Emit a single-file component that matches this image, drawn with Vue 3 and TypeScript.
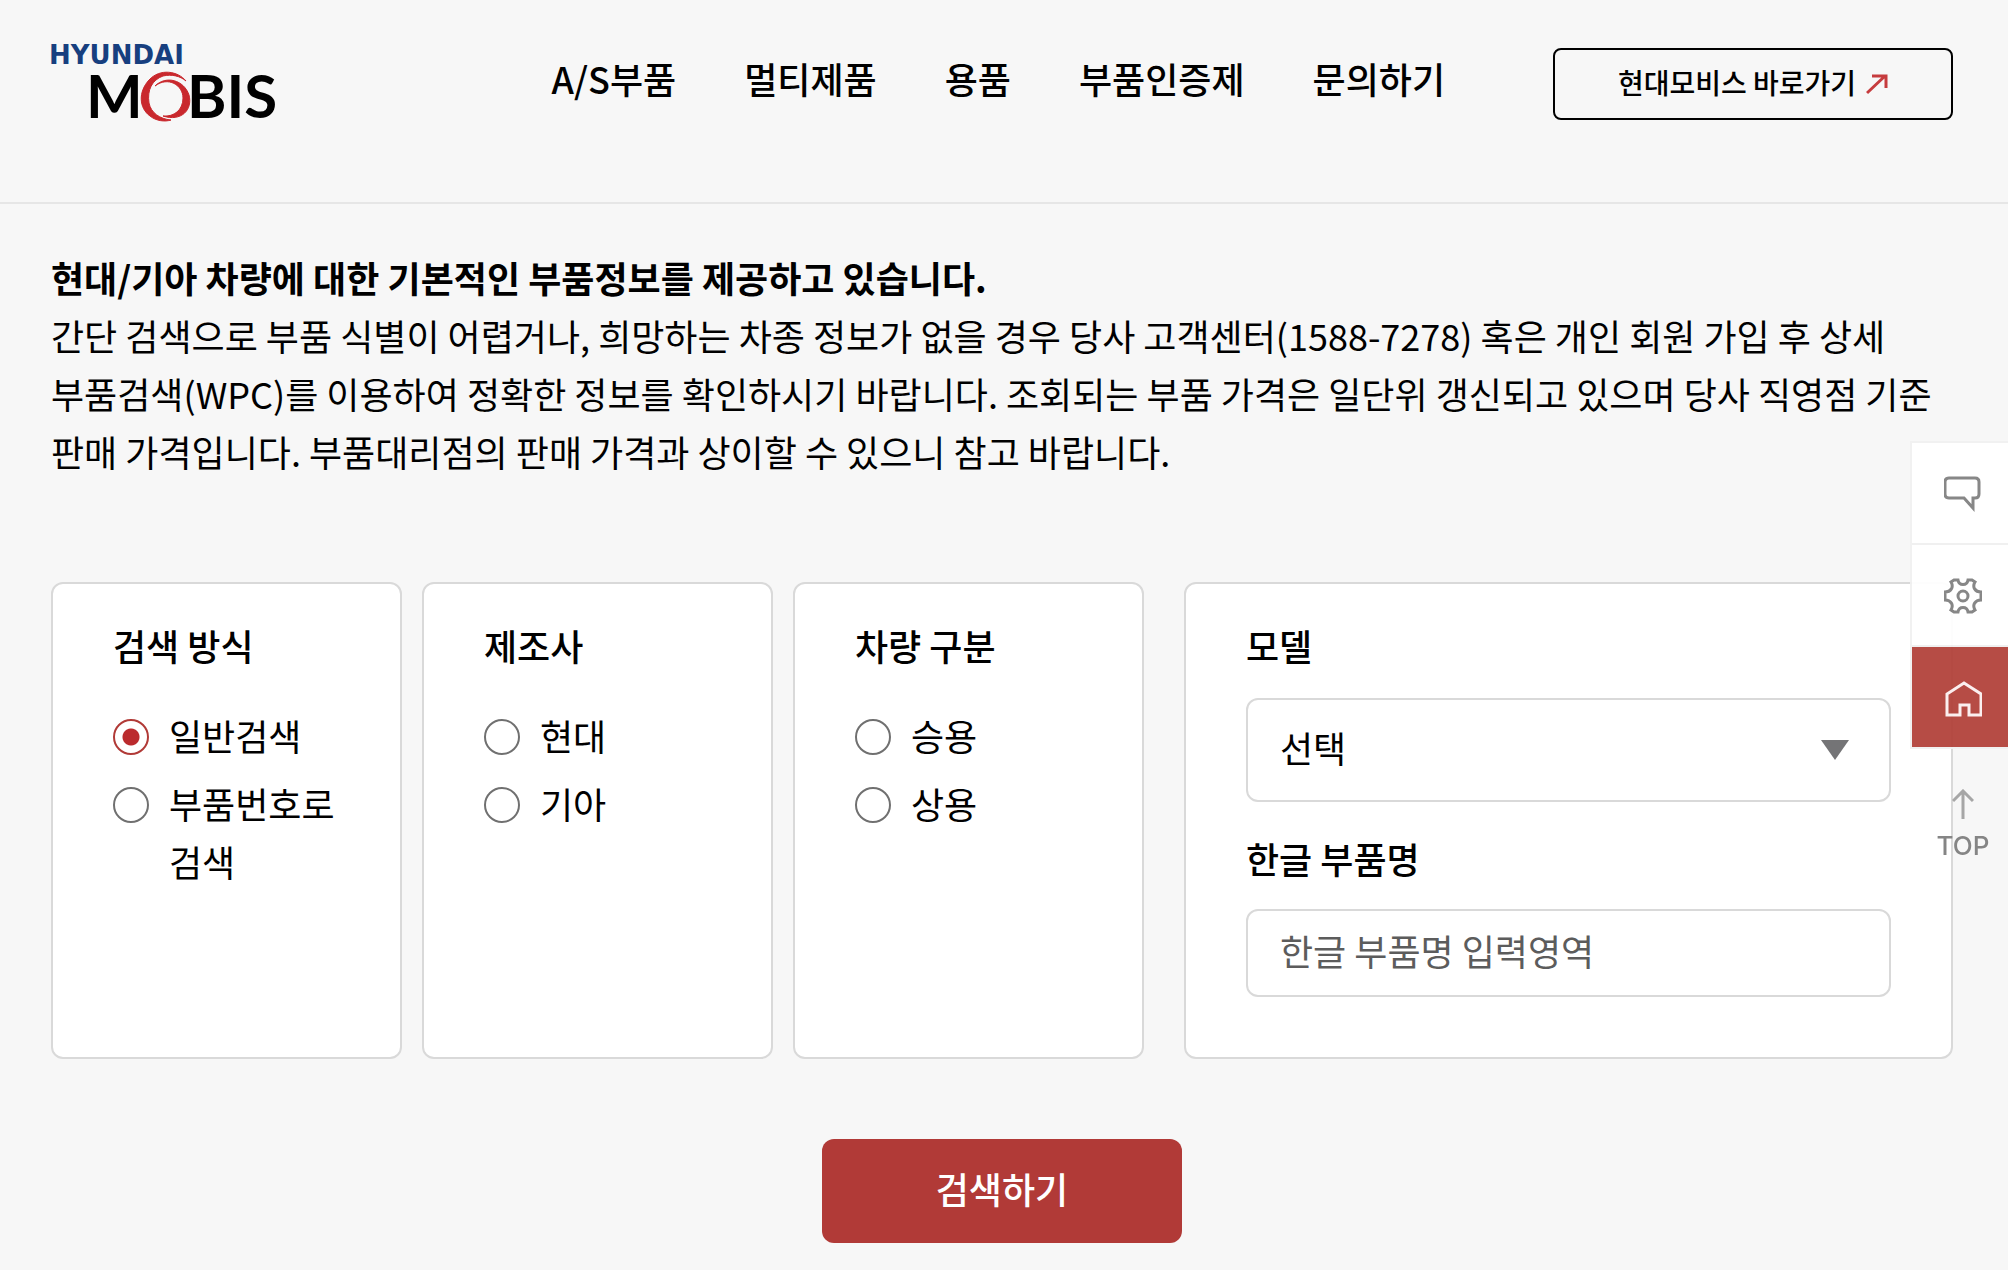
<script setup lang="ts">
import { ref } from 'vue'

interface RadioGroup {
  name: string
  title: string
  options: string[]
}

const menu: string[] = ['A/S부품', '멀티제품', '용품', '부품인증제', '문의하기']

const groups: RadioGroup[] = [
  { name: 'method', title: '검색 방식', options: ['일반검색', '부품번호로 검색'] },
  { name: 'maker', title: '제조사', options: ['현대', '기아'] },
  { name: 'vehicle', title: '차량 구분', options: ['승용', '상용'] },
]

const picked = ref<Record<string, string>>({ method: '일반검색', maker: '', vehicle: '' })
const model = ref('')
const partName = ref('')
</script>

<template>
  <div class="page">
    <header class="header">
      <a class="logo" href="#" aria-label="HYUNDAI MOBIS">
        <svg width="236" height="104" viewBox="0 0 236 104">
          <text class="logo-top" x="-2" y="30">HYUNDAI</text>
          <text class="logo-main" x="35" y="84">M</text>
          <text class="logo-main" x="136" y="84">BIS</text>
          <g fill="#c9282d" stroke="#c9282d">
            <path
              d="M135 47C127 37 109 34 98 46C87 58 88 74 99 82C105 87 114 88 120 86C109 85 100 79 98 69C96 56 101 46 112 42C121 40 129 42 135 47Z"
            />
            <path d="M104 52C115 41 133 46 138 61C142 76 130 88 112 82C123 83 132 76 132 64C132 51 117 42 104 52Z" />
          </g>
        </svg>
      </a>
      <nav class="menu">
        <a v-for="item in menu" :key="item" href="#">{{ item }}</a>
      </nav>
      <a class="shortcut" href="#">
        현대모비스 바로가기
        <svg width="22" height="22" viewBox="0 0 22 22" fill="none" stroke="#c63c3e" stroke-width="3">
          <path d="M1 20L19 3M6 3H20V15" />
        </svg>
      </a>
    </header>

    <main class="content">
      <div class="intro">
        <strong>현대/기아 차량에 대한 기본적인 부품정보를 제공하고 있습니다.</strong>
        <p>
          간단 검색으로 부품 식별이 어렵거나, 희망하는 차종 정보가 없을 경우 당사 고객센터(1588-7278) 혹은 개인 회원 가입 후 상세
          부품검색(WPC)를 이용하여 정확한 정보를 확인하시기 바랍니다. 조회되는 부품 가격은 일단위 갱신되고 있으며 당사 직영점 기준
          판매 가격입니다. 부품대리점의 판매 가격과 상이할 수 있으니 참고 바랍니다.
        </p>
      </div>

      <form @submit.prevent>
        <div class="panels">
          <div class="groups">
            <section
              v-for="group in groups"
              :key="group.name"
              class="card"
              role="radiogroup"
              :aria-labelledby="`${group.name}-title`"
            >
              <h2 :id="`${group.name}-title`">{{ group.title }}</h2>
              <div class="options">
                <label v-for="option in group.options" :key="option">
                  <input v-model="picked[group.name]" type="radio" :name="group.name" :value="option" />
                  <span>{{ option }}</span>
                </label>
              </div>
            </section>
          </div>

          <section class="card fields">
            <label for="model">모델</label>
            <div class="select">
              <select id="model" v-model="model">
                <option value="">선택</option>
              </select>
              <svg width="28" height="20" viewBox="0 0 28 20" fill="#747476"><path d="M0 0H28L14 20Z" /></svg>
            </div>
            <label for="part">한글 부품명</label>
            <input id="part" v-model="partName" type="text" placeholder="한글 부품명 입력영역" />
          </section>
        </div>
        <button class="submit" type="submit">검색하기</button>
      </form>
    </main>

    <aside class="quick">
      <div class="quick-box">
        <a href="#" aria-label="문의">
          <svg width="38" height="36" viewBox="0 0 38 36" fill="none" stroke="#808080" stroke-width="3">
            <path d="M5 2H31Q35 2 35 6V18Q35 22 31 22H29V32L20 22H5Q1 22 1 18V6Q1 2 5 2Z" />
          </svg>
        </a>
        <a href="#" aria-label="설정">
          <svg width="38" height="36" viewBox="0 0 38 36" fill="none" stroke="#808080" stroke-width="3">
            <path
              d="M10 2L14 2C15 8 23 8 24 2L28 2L31 4C28 9 31 14 37 14V22C31 22 28 27 31 32L28 34L24 34C23 28 15 28 14 34L10 34L7 32C10 27 7 22 1 22V14C7 14 10 9 7 4Z"
            />
            <circle cx="19" cy="18" r="5" />
          </svg>
        </a>
        <a class="home" href="#" aria-label="홈">
          <svg width="38" height="36" viewBox="0 0 38 36" fill="none" stroke="#fbeeee" stroke-width="3">
            <path d="M3 34V13L20 2L37 13V34H25V24H16V34Z" />
          </svg>
        </a>
      </div>
      <a class="top" href="#">
        <svg width="22" height="30" viewBox="0 0 22 30" fill="none" stroke="#a6a6a6" stroke-width="3">
          <path d="M11 30V2M1 12L11 2L21 12" />
        </svg>
        TOP
      </a>
    </aside>
  </div>
</template>

<style>
body {
  margin: 0;
  background: #f7f7f7;
}
</style>

<style scoped>
.page {
  box-sizing: border-box;
  min-height: 100vh;
  color: #000;
  background: #f7f7f7;
  font-family: 'Noto Sans CJK KR', sans-serif;
  font-size: 36px;
  line-height: 58px;
  word-break: keep-all;
}

.page * {
  box-sizing: border-box;
}

a {
  color: inherit;
  text-decoration: none;
}

.header {
  display: flex;
  align-items: flex-start;
  padding: 34px 55px 64px 51px;
  border-bottom: 2px solid #e6e6e6;
}

.logo svg {
  display: block;
  overflow: visible;
}

.logo-top {
  fill: #173f7f;
  font: 700 26px 'DejaVu Sans', sans-serif;
}

.logo-main {
  fill: #000;
  font: 700 60px Lato, sans-serif;
}

.menu {
  display: flex;
  gap: 68px;
  margin: 15px 108px 0 auto;
  font-weight: 500;
}

.shortcut {
  display: flex;
  align-items: center;
  justify-content: center;
  gap: 10px;
  width: 400px;
  height: 72px;
  margin-top: 14px;
  padding-bottom: 4px;
  border: 2px solid #000;
  border-radius: 8px;
  font-size: 28px;
  font-weight: 500;
}

.shortcut svg {
  margin-top: 4px;
}

.content {
  padding: 44px 55px 26px 51px;
}

.intro {
  margin-bottom: 102px;
}

.intro strong {
  display: block;
}

.intro p {
  margin: 0;
}

.panels {
  display: grid;
  grid-template-columns: 1093fr 769fr;
  gap: 40px;
}

.groups {
  display: grid;
  grid-template-columns: repeat(3, 1fr);
  gap: 20px;
}

.card {
  min-width: 0;
  padding: 32px 60px 60px;
  border: 2px solid #d9d9d9;
  border-radius: 12px;
  background: #fff;
}

.card h2,
.fields label {
  margin: 0;
  font-size: 36px;
  font-weight: 500;
}

.options {
  display: flex;
  flex-direction: column;
  gap: 10px;
  margin-top: 32px;
}

.options label {
  display: flex;
  align-items: flex-start;
  gap: 20px;
}

.options input {
  flex: none;
  width: 36px;
  height: 36px;
  margin: 13px 0 0;
  appearance: none;
  border: 2px solid #707070;
  border-radius: 50%;
  background: #fff;
}

.options input:checked {
  border-color: #b13a37;
  background: radial-gradient(circle, #bb2b2e 8px, #fff 9px);
}

.fields {
  display: flex;
  flex-direction: column;
}

.select {
  position: relative;
  margin: 24px 0 27px;
}

.select svg {
  position: absolute;
  top: 42px;
  right: 42px;
  pointer-events: none;
}

.fields select,
.fields input {
  display: block;
  width: 100%;
  padding: 0 32px 6px;
  border: 2px solid #d9d9d9;
  border-radius: 12px;
  background: #fff;
  color: #000;
  font: inherit;
}

.fields select {
  height: 104px;
  appearance: none;
}

.fields input {
  height: 88px;
  margin-top: 22px;
}

.fields input::placeholder {
  color: #5c5c5c;
}

.submit {
  display: block;
  width: 360px;
  height: 104px;
  margin: 80px auto 0;
  padding: 0 0 6px;
  border: 0;
  border-radius: 12px;
  background: #b13a37;
  color: #fff;
  font: inherit;
  font-weight: 500;
}

.quick {
  position: fixed;
  top: 441px;
  right: 0;
  width: 98px;
}

.quick-box {
  border: 2px solid #f1f1f1;
  border-right: 0;
  opacity: 0.94;
}

.quick-box a {
  display: flex;
  align-items: center;
  justify-content: center;
  height: 102px;
  padding: 2px 0 0 6px;
  border-bottom: 2px solid #f0f0f0;
  background: #fff;
}

.quick-box .home {
  height: 100px;
  padding-top: 4px;
  border: 0;
  background: #b2413a;
}

.top {
  display: flex;
  flex-direction: column;
  align-items: center;
  gap: 13px;
  padding: 40px 0 0 8px;
  color: #858585;
  font: 500 26px/28px Inter, sans-serif;
}
</style>
